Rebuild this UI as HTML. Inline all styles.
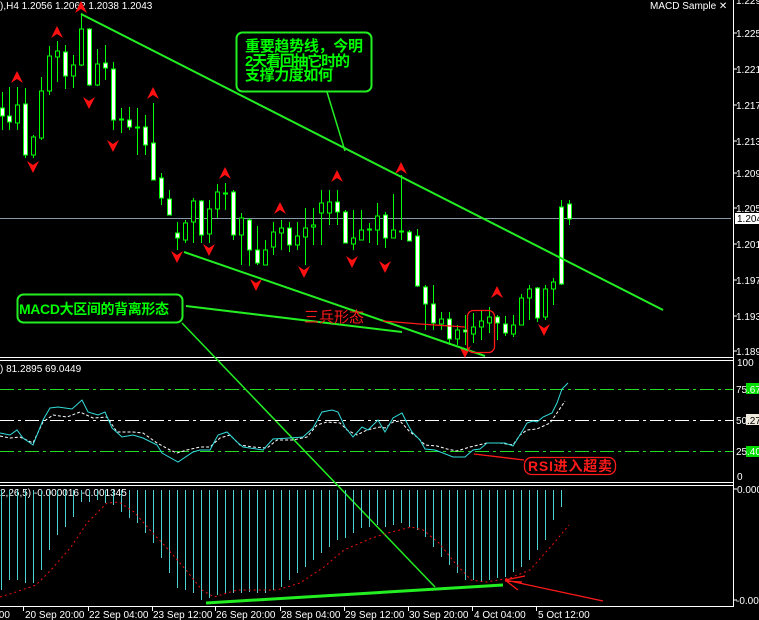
<!DOCTYPE html>
<html><head><meta charset="utf-8"><style>
html,body{margin:0;padding:0;background:#000;width:759px;height:620px;overflow:hidden}
svg{display:block}
.ax{font-family:"Liberation Sans",sans-serif;font-size:10px;fill:#fff}
.cn{font-family:"Liberation Sans","Noto Sans CJK SC",sans-serif;font-weight:bold;fill:#00ff00}
</style></head><body>
<svg width="759" height="620" viewBox="0 0 759 620" xmlns="http://www.w3.org/2000/svg">
<rect width="759" height="620" fill="#000"/>
<g stroke="#fff" stroke-width="1" fill="none">
<line x1="733.5" y1="0" x2="733.5" y2="607"/>
<line x1="0" y1="357.5" x2="734" y2="357.5"/><line x1="0" y1="360.5" x2="734" y2="360.5"/>
<line x1="0" y1="482.5" x2="734" y2="482.5"/><line x1="0" y1="485.5" x2="734" y2="485.5"/>
<line x1="0" y1="606.5" x2="734" y2="606.5"/>
</g>
<g stroke="#fff">
<path d="M733 33h4M733 69h4M733 105h4M733 141h4M733 173h4M733 208h4M733 244h4M733 280h4M733 316h4M733 351h4M733 489h4M733 600h4"/>
<path d="M23.5 607v4M88.5 607v4M152.5 607v4M215.5 607v4M280.5 607v4M344.5 607v4M408.5 607v4M472.5 607v4M536.5 607v4"/>
</g>
<g class="ax">
<text x="736" y="4">1.229</text>
<text x="736" y="37">1.2255</text><text x="736" y="73">1.2210</text><text x="736" y="109">1.2170</text>
<text x="736" y="145">1.2130</text><text x="736" y="177">1.2095</text><text x="736" y="212">1.2055</text>
<text x="736" y="248">1.2015</text><text x="736" y="284">1.1975</text><text x="736" y="320">1.1935</text>
<text x="736" y="355">1.1895</text>
<text x="737" y="366">100</text><text x="737" y="480">0</text>
<text x="737" y="493">0.000</text><text x="736" y="604">-0.004</text>
</g>
<line x1="0" y1="218.5" x2="731" y2="218.5" stroke="#8899aa"/>
<rect x="735" y="213" width="24" height="11" fill="#fff"/>
<text x="737" y="222" class="ax" style="fill:#000">1.2043</text>
<rect x="746" y="383" width="13" height="11" fill="#00e000"/><text x="736" y="393" class="ax">75</text><text x="747" y="393" class="ax">.67</text>
<rect x="746" y="414" width="13" height="11" fill="#eee8dd"/><text x="736" y="424" class="ax">50</text><text x="747" y="424" class="ax" style="fill:#000">.27</text>
<rect x="746" y="446" width="13" height="11" fill="#00e000"/><text x="736" y="455" class="ax">25</text><text x="747" y="455" class="ax">.40</text>
<text x="0" y="9" class="ax">),H4  1.2056  1.2062  1.2038  1.2043</text>
<text x="650" y="9" class="ax">MACD Sample  ✕</text>
<text x="0" y="372" class="ax">)  81.2895  69.0449</text>
<text x="0" y="496" class="ax">2,26,5)  -0.000016  -0.001345</text>
<g class="ax">
<text x="-4" y="618">:00</text>
<text x="25" y="618">20 Sep 20:00</text><text x="89" y="618">22 Sep 04:00</text>
<text x="153" y="618">23 Sep 12:00</text><text x="216" y="618">26 Sep 20:00</text>
<text x="281" y="618">28 Sep 04:00</text><text x="345" y="618">29 Sep 12:00</text>
<text x="409" y="618">30 Sep 20:00</text><text x="474" y="618">4 Oct 04:00</text>
<text x="538" y="618">5 Oct 12:00</text>
</g>
<path stroke="#00ff00" stroke-width="1" fill="none" d="
M2.5 92V130M9.5 87V130M17.5 87V130M25.5 88V158M33.5 135V158M41.5 77V140M49.5 46V95M57.5 41V82M65.5 45V89M73.5 55V88M81.5 13V66M89.5 28V86M97.5 49V86M105.5 45V80M113.5 62V130M121.5 108V133M129.5 107V130M137.5 108V155M145.5 115V155M153.5 103V180
M161.5 173V205M169.5 190V215M177.5 222V250M185.5 220V243M193.5 198V243M201.5 200V243M209.5 200V243M217.5 184V218M225.5 183V210M233.5 190V240M241.5 213V265M249.5 218V266M257.5 226V265M265.5 240V265M273.5 222V255M281.5 220V250M289.5 222V252M297.5 222V250M305.5 208V265M313.5 208V245M321.5 190V245M329.5 190V225M337.5 190V225M345.5 210V240M353.5 210V250M361.5 210V240M369.5 223V243M377.5 203V245M385.5 212V248M393.5 194V237M401.5 175V240M409.5 230V241M417.5 229V287M425.5 285V330M433.5 285V330M441.5 312V330M449.5 312V345M457.5 325V345M465.5 315V345M473.5 313V343M481.5 310V340M489.5 307V333M497.5 315V340M505.5 316V336M513.5 315V337M521.5 294V325M529.5 285V320M537.5 287V322M545.5 285V320M553.5 278V305M561.5 200V285M569.5 200V225"/>
<g fill="#fff" stroke="#00ff00" stroke-width="1">
<rect x="0.5" y="108" width="4" height="8"/><rect x="7.5" y="116" width="4" height="6"/><rect x="23.5" y="104" width="4" height="51"/>
<rect x="63.5" y="52" width="4" height="24"/><rect x="87.5" y="29" width="4" height="56"/><rect x="103.5" y="63" width="4" height="5"/>
<rect x="111.5" y="69" width="4" height="51"/><rect x="127.5" y="120" width="4" height="7"/><rect x="143.5" y="127" width="4" height="18"/>
<rect x="151.5" y="143" width="4" height="37"/><rect x="159.5" y="178" width="4" height="20"/><rect x="167.5" y="199" width="4" height="16"/>
<rect x="175.5" y="233" width="4" height="5"/><rect x="199.5" y="201" width="4" height="34"/><rect x="231.5" y="192" width="4" height="43"/>
<rect x="247.5" y="220" width="4" height="30"/><rect x="255.5" y="250" width="4" height="13"/><rect x="287.5" y="228" width="4" height="17"/>
<rect x="335.5" y="202" width="4" height="10"/><rect x="343.5" y="212" width="4" height="31"/><rect x="383.5" y="215" width="4" height="23"/>
<rect x="407.5" y="232" width="4" height="9"/><rect x="415.5" y="236" width="4" height="50"/><rect x="423.5" y="287" width="4" height="17"/>
<rect x="431.5" y="304" width="4" height="19"/><rect x="447.5" y="319" width="4" height="20"/><rect x="463.5" y="330" width="4" height="2"/>
<rect x="495.5" y="317" width="4" height="6"/><rect x="503.5" y="324" width="4" height="9"/><rect x="535.5" y="288" width="4" height="30"/>
<rect x="559.5" y="207" width="4" height="77"/><rect x="567.5" y="204" width="4" height="15"/>
</g>
<g fill="#000" stroke="#00ff00" stroke-width="1">
<rect x="15.5" y="105" width="4" height="18"/><rect x="31.5" y="137" width="4" height="18"/><rect x="39.5" y="91" width="4" height="47"/>
<rect x="47.5" y="56" width="4" height="35"/><rect x="55.5" y="51" width="4" height="6"/><rect x="71.5" y="65" width="4" height="11"/>
<rect x="79.5" y="29" width="4" height="36"/><rect x="95.5" y="64" width="4" height="21"/><rect x="119.5" y="119" width="4" height="1"/>
<rect x="135.5" y="127" width="4" height="1"/><rect x="183.5" y="223" width="4" height="17"/><rect x="191.5" y="201" width="4" height="21"/>
<rect x="207.5" y="209" width="4" height="25"/><rect x="215.5" y="192" width="4" height="17"/><rect x="223.5" y="193" width="4" height="1"/>
<rect x="239.5" y="218" width="4" height="17"/><rect x="263.5" y="250" width="4" height="15"/><rect x="271.5" y="232" width="4" height="15"/>
<rect x="279.5" y="228" width="4" height="5"/><rect x="295.5" y="236" width="4" height="9"/><rect x="303.5" y="228" width="4" height="9"/>
<rect x="311.5" y="225" width="4" height="2"/><rect x="319.5" y="203" width="4" height="10"/><rect x="327.5" y="202" width="4" height="11"/>
<rect x="351.5" y="238" width="4" height="6"/><rect x="359.5" y="230" width="4" height="10"/><rect x="367.5" y="229" width="4" height="1"/>
<rect x="375.5" y="216" width="4" height="14"/><rect x="391.5" y="230" width="4" height="8"/><rect x="399.5" y="231" width="4" height="1"/>
<rect x="439.5" y="319" width="4" height="5"/><rect x="455.5" y="330" width="4" height="9"/><rect x="471.5" y="327" width="4" height="7"/>
<rect x="479.5" y="321" width="4" height="6"/><rect x="487.5" y="317" width="4" height="6"/><rect x="511.5" y="325" width="4" height="9"/>
<rect x="519.5" y="298" width="4" height="27"/><rect x="527.5" y="289" width="4" height="9"/><rect x="543.5" y="289" width="4" height="28"/>
<rect x="551.5" y="282" width="4" height="7"/>
</g>
<g fill="#ff1010">
<path d="M17 71l-6 12 6-4 6 4z M57 26l-6 12 6-4 6 4z M81 1l-6 12 6-4 6 4z M153 87l-6 12 6-4 6 4z M225 167l-6 12 6-4 6 4z M280 202l-6 12 6-4 6 4z M337 170l-6 12 6-4 6 4z M401 162l-6 12 6-4 6 4z M497 286l-6 12 6-4 6 4z"/>
<path d="M33 173l-6-12 6 4 6-4z M89 109l-6-12 6 4 6-4z M113 152l-6-12 6 4 6-4z M177 263l-6-12 6 4 6-4z M209 256l-6-12 6 4 6-4z M256 291l-6-12 6 4 6-4z M304 278l-6-12 6 4 6-4z M352 268l-6-12 6 4 6-4z M385 273l-6-12 6 4 6-4z M465 358l-6-12 6 4 6-4z M544 336l-6-12 6 4 6-4z"/>
</g>
<g stroke="#22ee22" stroke-width="2" fill="none">
<line x1="81" y1="14" x2="663" y2="310"/>
<line x1="184" y1="252" x2="485" y2="356"/>
<line x1="186" y1="306" x2="402" y2="332"/>
</g>
<line x1="327" y1="92" x2="345" y2="151" stroke="#22ee22" stroke-width="1.5"/>
<line x1="182" y1="323" x2="435" y2="587" stroke="#22ee22" stroke-width="1.5"/>
<rect x="236.5" y="32.5" width="135" height="59" rx="6" fill="#000" stroke="#22ee22" stroke-width="2"/>
<g class="cn" font-size="15">
<text x="245" y="51" textLength="118">重要趋势线，今明</text>
<text x="245" y="66" textLength="105">2天看回抽它时的</text>
<text x="245" y="80" textLength="88">支撑力度如何</text>
</g>
<rect x="17.5" y="294.5" width="165" height="28" rx="6" fill="#000" stroke="#22ee22" stroke-width="2"/>
<text x="19" y="314" class="cn" font-size="14" textLength="150">MACD大区间的背离形态</text>
<text x="304" y="322" font-family="'Liberation Sans','Noto Sans CJK SC',sans-serif" font-size="15" fill="#ff1a1a">三兵形态</text>
<path d="M383 321L420 324L465 327" stroke="#ff1a1a" stroke-width="1.3" fill="none"/>
<rect x="467.5" y="310.5" width="27" height="42" rx="6" fill="none" stroke="#ff1a1a" stroke-width="1.3"/>
<g stroke-width="1" fill="none">
<line x1="0" y1="389.5" x2="733" y2="389.5" stroke="#22dd22" stroke-dasharray="14,4,3,4"/>
<line x1="0" y1="420.5" x2="733" y2="420.5" stroke="#ffffff" stroke-dasharray="14,4,3,4"/>
<line x1="0" y1="451.5" x2="733" y2="451.5" stroke="#22dd22" stroke-dasharray="14,4,3,4"/>
<polyline stroke="#ffffff" stroke-dasharray="3,2" points="0,436 10,438 20,437 33,443 43,422 53,415 67,417 80,412 93,418 107,417 117,432 133,432 143,433 157,443 170,450 177,453 187,450 200,447 210,447 220,438 230,435 240,445 253,447 267,448 277,440 293,440 307,437 317,425 327,422 340,423 347,430 357,435 367,430 380,427 385,428 393,422 400,421 410,432 417,437 425,445 437,446 447,449 457,451 470,447 487,443 500,443 513,445 520,435 527,430 537,429 550,423 557,413 565,401"/>
<polyline stroke="#33dddd" points="0,433 10,435 17,430 23,438 33,445 43,420 50,408 58,407 72,409 82,400 88,412 98,415 105,412 112,428 122,437 133,435 143,438 157,445 162,453 178,462 193,452 200,450 210,450 218,435 227,432 237,442 243,447 263,450 273,439 290,438 303,437 313,428 322,412 332,410 338,412 345,427 353,437 362,427 368,430 378,420 385,432 393,418 402,413 407,423 412,432 420,440 425,449 435,450 443,453 453,457 465,457 473,450 480,449 487,443 498,443 505,443 513,446 523,430 527,423 533,421 537,422 543,417 552,413 557,403 562,389 568,383"/>
</g>
<path d="M474 454L524 460" stroke="#ff1a1a" stroke-width="1.3"/>
<rect x="524.5" y="457.5" width="91" height="17" rx="7" fill="#000" stroke="#ff1a1a" stroke-width="1.3"/>
<text x="528" y="471" font-family="'Liberation Sans','Noto Sans CJK SC',sans-serif" font-weight="bold" font-size="14" fill="#ff1a1a" textLength="84">RSI进入超卖</text>
<path stroke="#4dd0d0" stroke-width="1" fill="none" d="M1.5 490V590M9.5 490V580M17.5 490V580M25.5 490V583M33.5 490V583M41.5 490V570M49.5 490V550M57.5 490V535M65.5 490V527M73.5 490V517M81.5 490V502M89.5 490V502M97.5 490V500M105.5 490V503M113.5 490V505M121.5 490V512M129.5 490V518M137.5 490V523M145.5 490V533M153.5 490V543M161.5 490V558M169.5 490V573M177.5 490V588M185.5 490V590M193.5 490V593M201.5 490V600M209.5 490V598M217.5 490V595M225.5 490V593M233.5 490V593M241.5 490V593M249.5 490V592M257.5 490V593M265.5 490V593M273.5 490V590M281.5 490V587M289.5 490V580M297.5 490V573M305.5 490V567M313.5 490V560M321.5 490V553M329.5 490V547M337.5 490V540M345.5 490V538M353.5 490V533M361.5 490V528M369.5 490V527M377.5 490V525M385.5 490V527M393.5 490V525M401.5 490V523M409.5 490V527M417.5 490V530M425.5 490V537M433.5 490V547M441.5 490V557M449.5 490V565M457.5 490V573M465.5 490V580M473.5 490V580M481.5 490V582M489.5 490V580M497.5 490V578M505.5 490V577M513.5 490V572M521.5 490V567M529.5 490V560M537.5 490V550M545.5 490V540M553.5 490V520M561.5 490V507"/>
<polyline fill="none" stroke="#ee1111" stroke-width="1" stroke-dasharray="2,3" points="0,597 16,592 36,585 51,570 71,547 87,523 107,503 119,502 134,512 150,530 166,547 186,570 202,590 214,597 237,590 257,590 277,590 300,583 324,567 344,550 372,538 388,533 411,527 423,530 439,543 455,563 471,580 486,582 510,578 530,570 554,543 569,525"/>
<path d="M206 603L503 585" stroke="#22ee22" stroke-width="3"/>
<path d="M505 580L603 601M505 580L525 576M505 580L518 590M505 581L522 582" stroke="#ff1a1a" stroke-width="1.3" fill="none"/>
</svg>
</body></html>
